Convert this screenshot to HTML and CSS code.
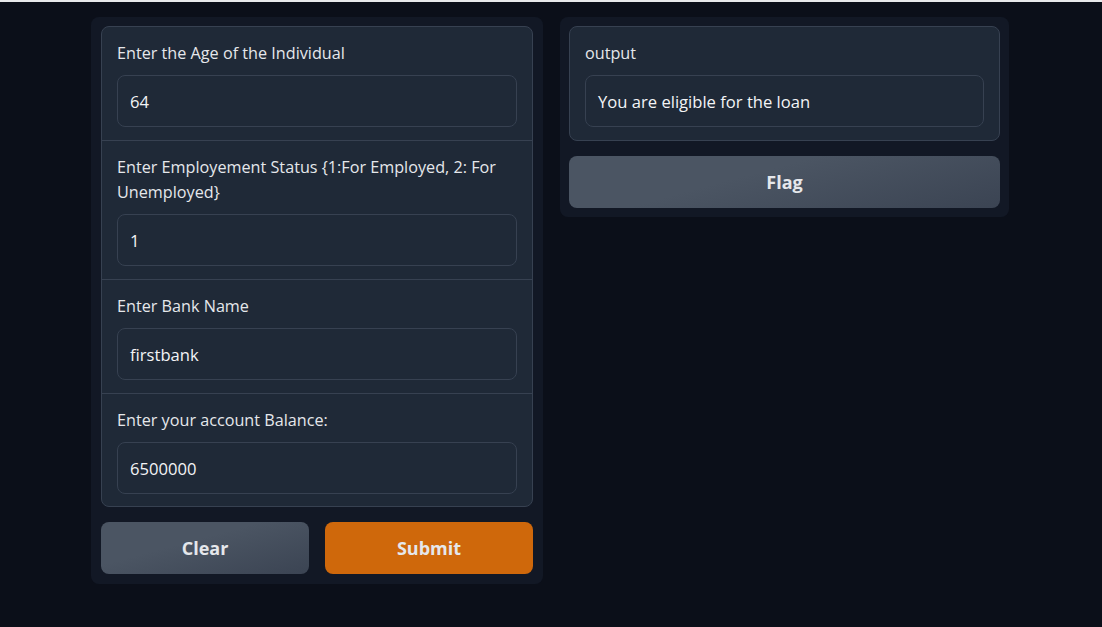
FILE: index.html
```html
<!DOCTYPE html>
<html>
<head>
<meta charset="utf-8">
<link rel="stylesheet" href="styles.css">
</head>
<body>
<div class="topbar"></div>
<main class="app">
  <section class="panel panel-left">
    <div class="form">
      <div class="field">
        <label class="label">Enter the Age of the Individual</label>
        <div class="input">64</div>
      </div>
      <div class="field">
        <label class="label">Enter Employement Status {1:For Employed, 2: For Unemployed}</label>
        <div class="input">1</div>
      </div>
      <div class="field">
        <label class="label">Enter Bank Name</label>
        <div class="input">firstbank</div>
      </div>
      <div class="field">
        <label class="label">Enter your account Balance:</label>
        <div class="input">6500000</div>
      </div>
    </div>
    <div class="buttons">
      <button class="btn btn-secondary">Clear</button>
      <button class="btn btn-primary">Submit</button>
    </div>
  </section>
  <section class="panel panel-right">
    <div class="form">
      <div class="field">
        <label class="label">output</label>
        <div class="input">You are eligible for the loan</div>
      </div>
    </div>
    <button class="btn btn-secondary btn-full">Flag</button>
  </section>
</main>
</body>
</html>
```
FILE: styles.css
```css
html, body {
  margin: 0;
  padding: 0;
  background: #0b0f19;
  height: 100%;
}
body {
  font-family: "Open Sans", "Noto Sans", sans-serif;
  color: #e5e7eb;
}
.topbar {
  height: 2px;
  background: #e8e9eb;
}
.app {
  display: flex;
  align-items: flex-start;
  gap: 17px;
  padding: 15px 0 0 91px;
}
.panel {
  background: #121825;
  border-radius: 8px;
  display: flex;
  flex-direction: column;
  gap: 15px;
}
.panel-left {
  width: 432px;
  padding: 9px 10px 10px;
}
.panel-right {
  width: 431px;
  padding: 9px 9px 9px 9px;
}
.form {
  background: #1f2937;
  border: 1px solid #374151;
  border-radius: 8px;
  overflow: hidden;
}
.field {
  padding: 14px 15px 13px;
  border-top: 1px solid #374151;
}
.field:first-child { border-top: none; }
.panel-left .field:last-child { padding-bottom: 12px; }
.label {
  display: block;
  font-size: 16.2px;
  line-height: 25px;
  margin-bottom: 9px;
  color: #e5e7eb;
}
.input {
  border: 1px solid #374151;
  border-radius: 8px;
  background: #1f2937;
  box-sizing: border-box;
  height: 52px;
  padding: 0 12px;
  display: flex;
  align-items: center;
  font-size: 16.6px;
  color: #f3f4f6;
}
.buttons {
  display: flex;
  gap: 16px;
}
.btn {
  flex: 1;
  height: 52px;
  border: none;
  border-radius: 8px;
  font-family: "Open Sans", "Noto Sans", sans-serif;
  font-weight: 700;
  font-size: 18px;
  color: #e5e7eb;
  cursor: pointer;
}
.btn-secondary {
  background: linear-gradient(165deg, #4b5563 40%, #3b4453 100%);
}
.btn-primary {
  background: #cf680b;
}
.btn-full {
  width: 100%;
  flex: none;
}
```
